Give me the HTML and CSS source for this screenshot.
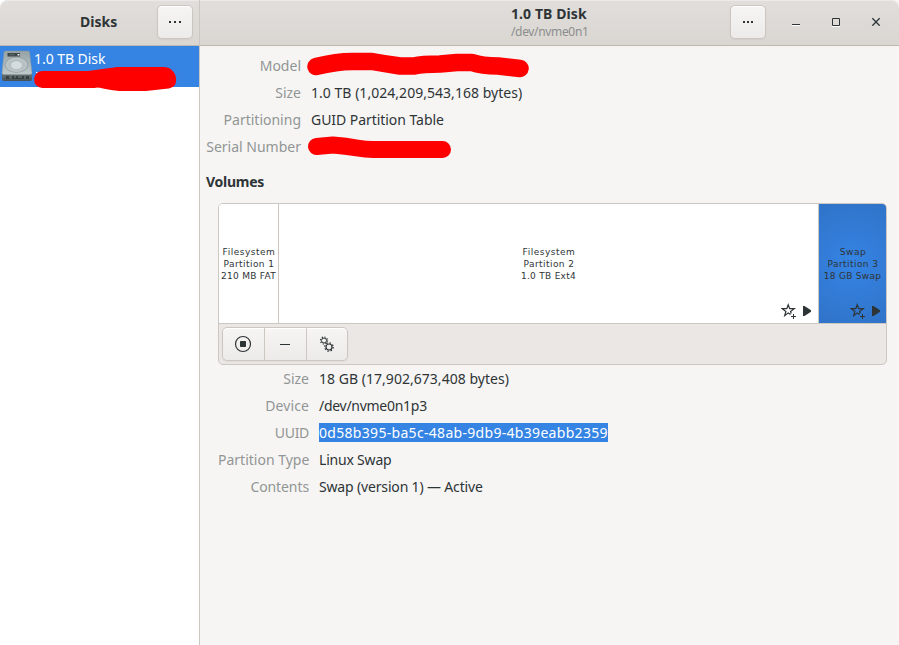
FILE: index.html
```html
<!DOCTYPE html>
<html lang="en">
<head>
<meta charset="utf-8">
<title>Disks</title>
<link rel="stylesheet" href="styles.css">
</head>
<body>
<svg class="defs" width="0" height="0">
  <symbol id="star" viewBox="0 0 16 16"><path d="M9.500 11.600 7.200 9.900 3.700 12.700l1.200-4.300L1.300 5.700h4.500L7.200 1.800l1.500 3.900h4.500L9.600 8.400l.6 2.100" fill="none" stroke="#2e3436" stroke-width="1.200"/><path d="M12.500 11v5M10 13.500h5" stroke="#2e3436"/></symbol>
  <symbol id="play" viewBox="0 0 8 10"><path d="M0 0h1.500L8 4.300v1.400L1.500 10H0z" fill="#2e3436"/></symbol>
</svg>
<div class="window">
  <aside class="sidebar">
    <header class="bar side-bar">
      <h1 class="title">Disks</h1>
      <button class="btn menu" aria-label="Menu"><svg width="14" height="2"><path d="M1 0h2v2H1zM6 0h2v2H6zM11 0h2v2h-2z" fill="#2e3436"/></svg></button>
    </header>
    <div class="disk">
      <svg class="drive" width="32" height="32" viewBox="0 0 32 32">
        <defs>
          <linearGradient id="metal" x2="0" y2="1"><stop stop-color="#96a2a5"/><stop offset="1" stop-color="#c0c9cb"/></linearGradient>
          <linearGradient id="front" x2="0" y2="1"><stop stop-color="#6f797c"/><stop offset="1" stop-color="#465053"/></linearGradient>
        </defs>
        <path d="M2 23h30v5.500q0 2.500-2 2.500H4q-2 0-2-2.500z" fill="url(#front)"/>
        <path d="M5.500 1h22.700q1.200 0 1.400 1.500L32 23q0 1.500-2 1.500H4Q2 24.500 2 23L4 2.500Q4.200 1 5.500 1z" fill="url(#metal)" stroke="#8a969a" stroke-width=".5"/>
        <path d="M7.500 3H20v3.500H7.500z" fill="#3c4548"/><path d="M9.500 4.800h5" stroke="#66767a"/><path d="M17.500 4h2v1.500h-2z" fill="#eef1f1"/>
        <ellipse cx="16.500" cy="14.800" rx="11.500" ry="7.500" fill="#abb6b9" stroke="#929ea2" stroke-width=".8"/>
        <ellipse cx="16.500" cy="14.800" rx="10" ry="6.600" fill="#b7c1c3" stroke="#cdd5d7" stroke-width=".6"/>
        <ellipse cx="16.500" cy="15.200" rx="6" ry="4.500" fill="#d5dcdd" stroke="#a7b1b4" stroke-width=".7"/>
        <path d="M6 26h3v3H6zM12 26h12v3H12zM26 26h3v3h-3z" fill="#353e41"/><path d="M14 27h2m2 0h4" stroke="#7d888b"/>
      </svg>
      <span class="disk-name">1.0 TB Disk</span>
      <svg class="mark mark-side" width="150" height="28"><path d="M3 9h1.500v1H3z" fill="#fff"/><path d="M9.500 16.500H60Q100 10 131 14" fill="none" stroke="red" stroke-width="17" stroke-linecap="round" stroke-linejoin="round"/><path d="M55 8Q76 5 84 4H130C140 4 144 12 143 19Q142 26 131 26L113 28H86Q69 26 61 23z" fill="red"/></svg>
    </div>
  </aside>
  <main class="main">
    <header class="bar main-bar">
      <div class="heading"><h2 class="title wide-title">1.0 TB Disk</h2><p class="subtitle">/dev/nvme0n1</p></div>
      <button class="btn menu" aria-label="Disk menu"><svg width="10" height="2"><path d="M0 0h2v2H0zM4 0h2v2H4zM8 0h2v2H8z" fill="#2e3436"/></svg></button>
      <div class="controls">
        <svg width="16" height="16"><path d="M4 11.500h8" stroke="#fff"/><path d="M4 10.500h8" stroke="#2e3436"/></svg>
        <svg width="16" height="16"><path d="M4 12.500h8" stroke="#fff"/><path d="M4.500 4.500h7v7h-7z" fill="none" stroke="#2e3436"/></svg>
        <svg width="16" height="16"><path d="m4.300 5.300 7.400 7.400m0-7.400-7.400 7.400" stroke="#fff"/><path d="m4.300 4.300 7.400 7.400m0-7.400-7.400 7.400" stroke="#2e3436" stroke-width="1.400"/></svg>
      </div>
    </header>
    <section class="content">
      <dl class="facts drive-facts">
        <dt class="l-model">Model</dt><dd><svg class="mark mark-model" width="230" height="26"><path d="M14 14.500Q35 9.500 50 9.500H70Q84 12 98 14H112Q120 12 138 12L155 10.500H170Q180 14 196 14L218 16.500" fill="none" stroke="red" stroke-width="17.500" stroke-linecap="round" stroke-linejoin="round"/></svg></dd>
        <dt class="l-size">Size</dt><dd><span class="v-total">1.0 TB (1,024,209,543,168 bytes)</span></dd>
        <dt class="l-part">Partitioning</dt><dd><span class="v-table">GUID Partition Table</span></dd>
        <dt class="l-serial">Serial Number</dt><dd><svg class="mark mark-serial" width="146" height="24"><path d="M9.500 11.500L26 10Q39 11 50 13T70 14.500H135.500" fill="none" stroke="red" stroke-width="17" stroke-linecap="round" stroke-linejoin="round"/></svg></dd>
      </dl>
      <h3 class="volumes-title">Volumes</h3>
      <div class="volumes">
        <div class="map">
          <div class="part p1"><span class="kind">Filesystem</span><span class="number">Partition 1</span><span>210 MB FAT</span></div>
          <div class="part p2"><span class="kind">Filesystem</span><span class="number">Partition 2</span><span>1.0 TB Ext4</span><div class="flags"><svg width="16" height="16"><use href="#star"/></svg><svg width="8" height="10"><use href="#play"/></svg></div></div>
          <div class="part p3"><span class="kind">Swap</span><span class="number">Partition 3</span><span>18 GB Swap</span><div class="flags"><svg width="16" height="16"><use href="#star"/></svg><svg width="8" height="10"><use href="#play"/></svg></div></div>
        </div>
        <div class="tools">
          <div class="btn group">
            <button aria-label="Stop"><svg width="18" height="18"><circle cx="9" cy="9" r="7.500" fill="none" stroke="#2e3436" stroke-width="1.200"/><rect x="6" y="6" width="6" height="6" rx=".8" fill="#2e3436"/></svg></button>
            <button aria-label="Remove"><svg width="16" height="16"><path d="M3 8.500h10" stroke="#2e3436"/></svg></button>
            <button aria-label="Options"><svg width="16" height="16"><g fill="none" stroke="#2e3436"><circle cx="5" cy="4.500" r="2.500" stroke-width="1"/><circle cx="5" cy="4.500" r="3.500" stroke-width="1.200" stroke-dasharray="1.200 1.550"/><circle cx="10" cy="11" r="3" stroke-width="1.200"/><circle cx="10" cy="11" r="4.200" stroke-width="1.300" stroke-dasharray="1.500 1.799"/></g></svg></button>
          </div>
        </div>
      </div>
      <dl class="facts volume-facts">
        <dt class="l-size">Size</dt><dd><span class="v-size">18 GB (17,902,673,408 bytes)</span></dd>
        <dt class="l-device">Device</dt><dd><span class="v-device">/dev/nvme0n1p3</span></dd>
        <dt class="l-uuid">UUID</dt><dd><span class="selected">0d58b395-ba5c-48ab-9db9-4b39eabb2359</span></dd>
        <dt class="l-type">Partition Type</dt><dd><span class="v-type">Linux Swap</span></dd>
        <dt class="l-contents">Contents</dt><dd><span class="v-contents">Swap (version 1) — Active</span></dd>
      </dl>
    </section>
  </main>
</div>
</body>
</html>
```
FILE: styles.css
```css
* { box-sizing: border-box; }
body { margin: 0; color: #2e3436; font: 14px/19px "Noto Sans", sans-serif; background: #f6f5f4; }
h1, h2, h3, p, dl, dd { margin: 0; }
svg { display: block; flex: none; }
button { padding: 0; border: 0; background: none; color: inherit; font: inherit; }
.defs { position: absolute; }
.window { display: grid; grid-template-columns: 200px 1fr; height: 645px; overflow: hidden; }
.sidebar { border-right: 1px solid #cdc7c2; background: #fff; }
.main { min-width: 0; }
.bar { display: flex; align-items: center; height: 46px; padding-bottom: 2px; border-bottom: 1px solid #bfb8b1; background: linear-gradient(#e1dedb, #dad6d2); box-shadow: inset 0 1px #eceae8; }
.title { font-size: 14px; line-height: 19px; font-weight: 700; white-space: nowrap; }
.wide-title { letter-spacing: .08px; }
.side-bar { padding-left: 80px; border-radius: 8px 0 0; justify-content: space-between; padding-right: 6px; }
.main-bar { padding-left: 311px; border-radius: 0 8px 0 0; }
.heading { width: 219px; }
.subtitle { font-size: 12px; line-height: 16px; margin-top: 1px; margin-bottom: -1px; letter-spacing: -.34px; color: #8b8e8d; }
.btn { display: flex; align-items: center; justify-content: center; height: 34px; border: 1px solid #cdc7c2; border-radius: 5px; background: linear-gradient(#f6f5f4, #edebe9); box-shadow: inset 0 1px #fff, 0 1px 2px #0000000d; }
.menu { width: 36px; }
.controls { display: flex; gap: 24px; margin-left: 22px; }
.disk { position: relative; display: flex; height: 41px; padding: 3px 0 0 34px; background: #3584e4; color: #fff; }
.disk-name { letter-spacing: -.05px; }
.drive { position: absolute; left: 0; top: 4px; }
.mark { position: absolute; }
.mark-side { left: 33px; top: 17px; }
.content { padding: 10px 12px 0 6px; }
.facts { display: grid; gap: 8px 10px; grid-auto-rows: 19px; white-space: nowrap; }
.drive-facts { grid-template-columns: 95px 1fr; }
.volume-facts { grid-template-columns: 91px 1fr; margin: 4px 0 0 12px; }
dt { text-align: right; color: #929595; }
dd { position: relative; }
dd span { display: inline-block; }
.mark-model { left: -9px; top: -4px; }
.mark-serial { left: -4px; top: -2px; }
.v-table { letter-spacing: -.05px; }
.v-size, .v-total { letter-spacing: .03px; }
.v-device { letter-spacing: -.28px; }
.v-type { letter-spacing: -.2px; }
.v-contents { letter-spacing: -.16px; }
.l-device { letter-spacing: .1px; }
.l-uuid { letter-spacing: -.3px; }
.l-contents { letter-spacing: -.1px; }
.volumes-title { margin: 16px 0 12px; font-size: 14px; line-height: 19px; font-weight: 700; letter-spacing: -.25px; }
.volumes { margin-left: 12px; width: 669px; height: 162px; border: 1px solid #cdc7c2; border-radius: 5px; background: #ebe7e4; overflow: hidden; }
.map { display: grid; grid-template-columns: 60px 540px 67px; height: 120px; border-bottom: 1px solid #cdc7c2; }
.part { position: relative; display: flex; flex-direction: column; align-items: center; justify-content: center; border-right: 1px solid #cdc7c2; background: #fff; font: 9px/12px "DejaVu Sans", sans-serif; letter-spacing: .28px; white-space: nowrap; }
.part .kind, .part .number { padding-left: 1px; }
.kind { letter-spacing: .52px; }
.number { letter-spacing: .45px; }
.p3 { border: 0; background: radial-gradient(circle at 50% 50%, #3584e4, #3073c8 100%); }
.flags { position: absolute; right: 7px; bottom: 4px; display: flex; align-items: center; gap: 6px; }
.p3 .flags { right: 6px; }
.tools { padding: 3px; }
.group { width: 126px; justify-content: flex-start; }
.group button { width: 42px; height: 32px; padding-right: 1px; display: flex; align-items: center; justify-content: center; border-right: 1px solid #cdc7c2; }
.group button:last-child { width: 40px; padding: 0; border: 0; }
.selected { background: #3584e4; color: #fff; letter-spacing: .306px; }
```
